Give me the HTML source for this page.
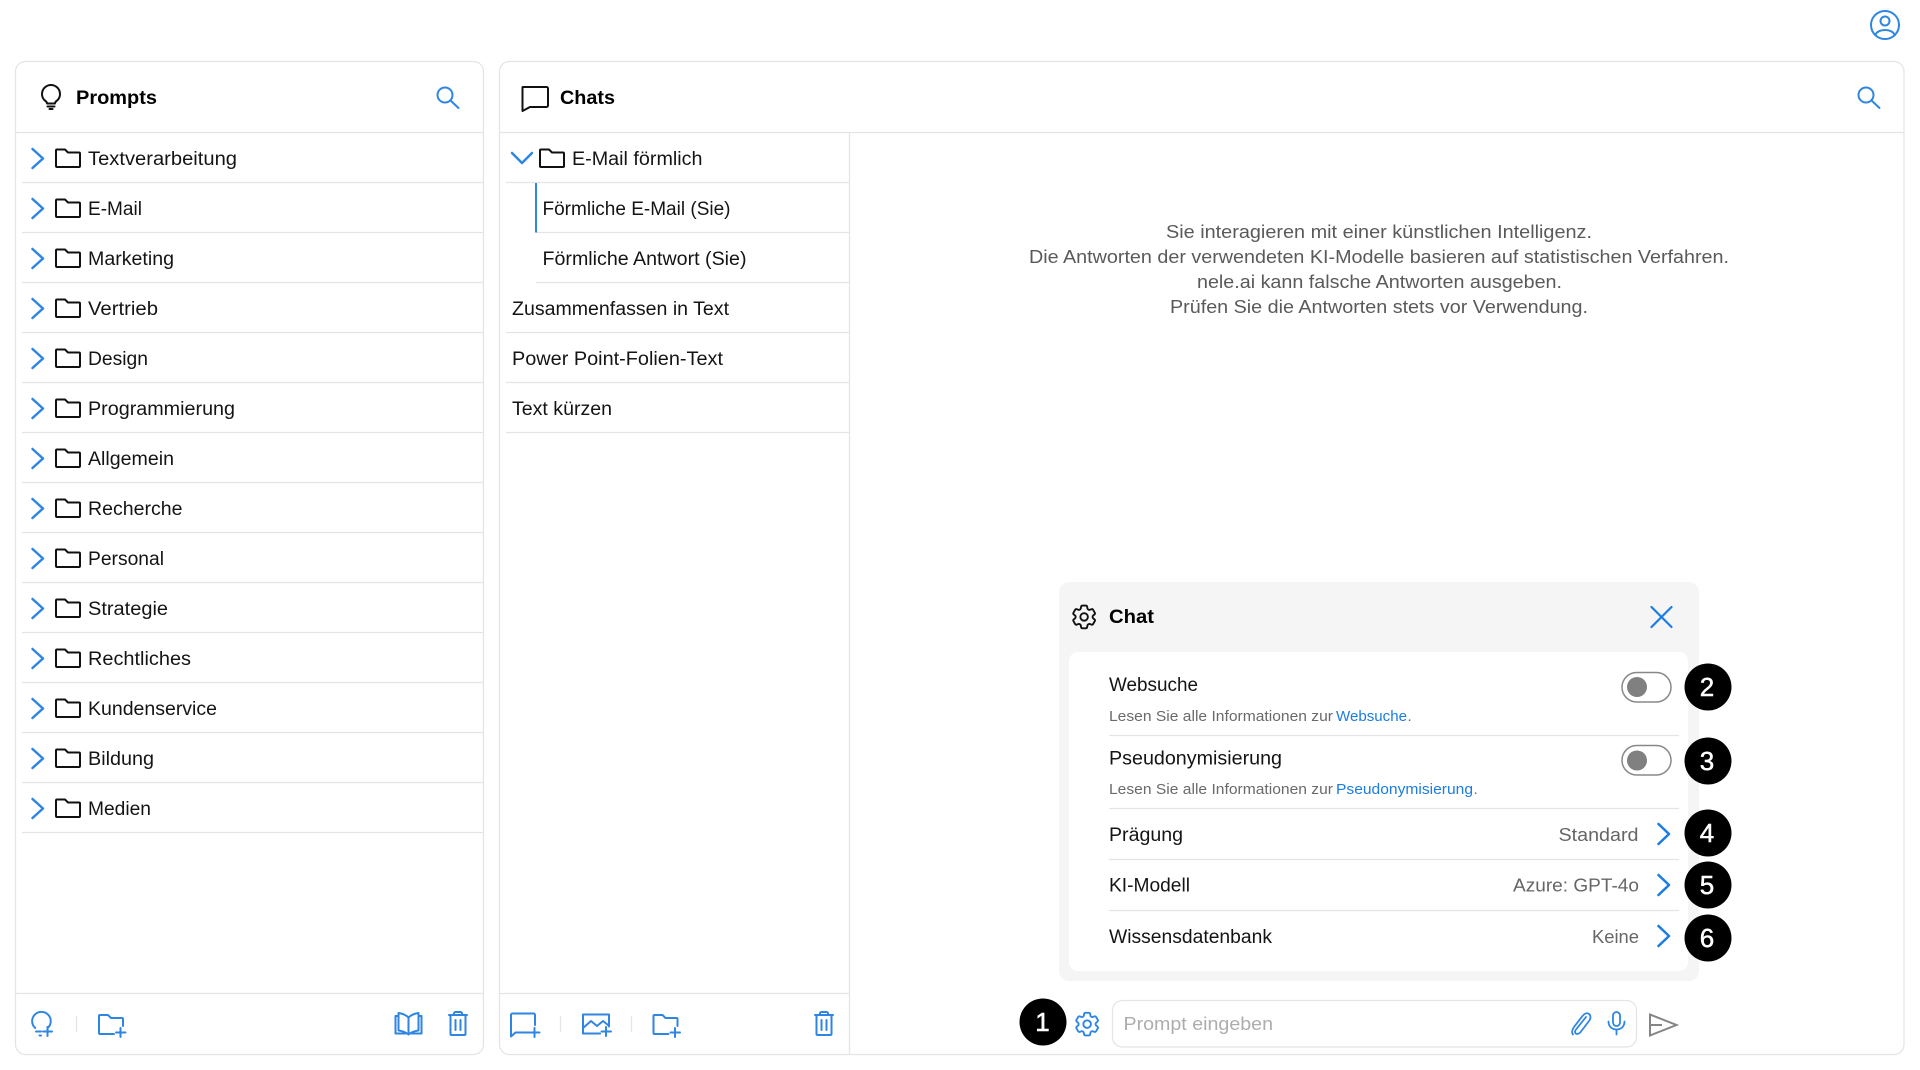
<!DOCTYPE html>
<html lang="de"><head><meta charset="utf-8"><title>Chats</title>
<style>
html,body{margin:0;padding:0;background:#fff;width:1920px;height:1070px;overflow:hidden}
svg{display:block;position:absolute;left:0;top:0}
text{font-family:"Liberation Sans",sans-serif;fill:#141414}
.r{font-size:19px}
.b{font-size:19px;font-weight:bold;fill:#000}
.c{font-size:18.5px;fill:#5a5a5a}
.s{font-size:15px;fill:#6a6a6a}
.a{font-size:15px;fill:#1b7ce2}
.v{font-size:18.5px;fill:#666}
.d{font-size:26px;fill:#fff;text-anchor:middle;stroke:#fff;stroke-width:.5}
.l{stroke:#e4e4e4;stroke-width:1.2;fill:none}
.bl{fill:none;stroke:#2f86e2;stroke-width:2;stroke-linecap:round;stroke-linejoin:round}
.w{stroke-width:2.5}
.t{stroke-width:1.8}
.bk{fill:none;stroke:#111;stroke-width:2;stroke-linecap:round;stroke-linejoin:round}
</style></head><body>
<svg width="1920" height="1070" viewBox="0 0 1920 1070" xmlns="http://www.w3.org/2000/svg">
<defs>
<g id="chev"><path d="M32.500 149L43 158.500L32.500 168" class="bl w"/></g>
<g id="folder"><path d="M57 149.500h8l3 3h11a1 1 0 0 1 1 1v12.500a1 1 0 0 1-1 1H57a1 1 0 0 1-1-1v-15.500a1 1 0 0 1 1-1z" class="bk"/></g>
<path id="gear" d="M9.594 3.94c.09-.542.56-.94 1.11-.94h2.593c.55 0 1.02.398 1.11.94l.213 1.281c.063.374.313.686.645.87.074.04.147.083.22.127.325.196.72.257 1.075.124l1.217-.456a1.125 1.125 0 0 1 1.37.49l1.296 2.247a1.125 1.125 0 0 1-.26 1.431l-1.003.827c-.293.241-.438.613-.43.992a7.723 7.723 0 0 1 0 .255c-.008.378.137.75.43.991l1.004.827c.424.35.534.955.26 1.43l-1.298 2.247a1.125 1.125 0 0 1-1.369.491l-1.217-.456c-.355-.133-.75-.072-1.076.124a6.47 6.47 0 0 1-.22.128c-.331.183-.581.495-.644.869l-.213 1.281c-.09.543-.56.94-1.11.94h-2.594c-.55 0-1.019-.398-1.11-.94l-.213-1.281c-.062-.374-.312-.686-.644-.87a6.52 6.52 0 0 1-.22-.127c-.325-.196-.72-.257-1.076-.124l-1.217.456a1.125 1.125 0 0 1-1.369-.49l-1.297-2.247a1.125 1.125 0 0 1 .26-1.431l1.004-.827c.292-.24.437-.613.43-.991a6.932 6.932 0 0 1 0-.255c.007-.38-.138-.751-.43-.992l-1.004-.827a1.125 1.125 0 0 1-.26-1.43l1.297-2.247a1.125 1.125 0 0 1 1.37-.491l1.216.456c.356.133.751.072 1.076-.124.072-.044.146-.086.22-.128.332-.183.582-.495.644-.869l.214-1.28ZM15 12a3 3 0 1 1-6 0 3 3 0 0 1 6 0Z"/>
<g id="search"><circle cx="445" cy="95" r="7.500" class="bl"/><path d="M450.500 100.500L458.500 108" class="bl"/></g>
<g id="trash"><path d="M449 1015h18M454 1015v-1.500a1.500 1.500 0 0 1 1.500-1.500h5a1.500 1.500 0 0 1 1.500 1.500v1.500M450.500 1015v19a1 1 0 0 0 1 1h13a1 1 0 0 0 1-1v-19M455.500 1020v10M460.500 1020v10" class="bl"/></g>
<g id="folderplus"><path d="M100 1015h8l3 3h11a1 1 0 0 1 1 1v7M114 1034H100a1 1 0 0 1-1-1v-17a1 1 0 0 1 1-1" class="bl"/><path d="M120.500 1028v9M116 1032.500h9.500" class="bl"/></g>
</defs>

<!-- top avatar -->
<g class="bl"><circle cx="1885" cy="25" r="14"/><circle cx="1885" cy="21" r="4.500"/><path d="M1875 35c2-3.500 6-5 10-5s8 1.500 10 5"/></g>

<!-- Prompts panel -->
<rect x="15.500" y="61.500" width="468" height="993" rx="10" class="l"/>
<path d="M16 132.500H483M16 993.500H483" class="l"/>
<g class="bk"><path d="M47 103.500c0-1.500-1.200-2.500-2.700-3.500A9 9 0 1 1 57.700 100c-1.500 1-2.700 2-2.700 3.500z"/><path d="M47.500 106.500h7"/><path d="M49.500 109h3"/></g>
<text x="76" y="104" class="b" textLength="81" lengthAdjust="spacingAndGlyphs">Prompts</text>
<use href="#search"/>

<g id="rows">
<g class="l"><path d="M22 182.500H483M22 232.500H483M22 282.500H483M22 332.500H483M22 382.500H483M22 432.500H483M22 482.500H483M22 532.500H483M22 582.500H483M22 632.500H483M22 682.500H483M22 732.500H483M22 782.500H483M22 832.500H483"/></g>
<use href="#chev"/><use href="#folder"/>
<use href="#chev" y="50"/><use href="#folder" y="50"/>
<use href="#chev" y="100"/><use href="#folder" y="100"/>
<use href="#chev" y="150"/><use href="#folder" y="150"/>
<use href="#chev" y="200"/><use href="#folder" y="200"/>
<use href="#chev" y="250"/><use href="#folder" y="250"/>
<use href="#chev" y="300"/><use href="#folder" y="300"/>
<use href="#chev" y="350"/><use href="#folder" y="350"/>
<use href="#chev" y="400"/><use href="#folder" y="400"/>
<use href="#chev" y="450"/><use href="#folder" y="450"/>
<use href="#chev" y="500"/><use href="#folder" y="500"/>
<use href="#chev" y="550"/><use href="#folder" y="550"/>
<use href="#chev" y="600"/><use href="#folder" y="600"/>
<use href="#chev" y="650"/><use href="#folder" y="650"/>
<text x="88" y="165" class="r" textLength="149" lengthAdjust="spacingAndGlyphs">Textverarbeitung</text>
<text x="88" y="215" class="r" textLength="54" lengthAdjust="spacingAndGlyphs">E-Mail</text>
<text x="88" y="265" class="r" textLength="86" lengthAdjust="spacingAndGlyphs">Marketing</text>
<text x="88" y="315" class="r" textLength="70" lengthAdjust="spacingAndGlyphs">Vertrieb</text>
<text x="88" y="365" class="r" textLength="60" lengthAdjust="spacingAndGlyphs">Design</text>
<text x="88" y="415" class="r" textLength="147" lengthAdjust="spacingAndGlyphs">Programmierung</text>
<text x="88" y="465" class="r" textLength="86" lengthAdjust="spacingAndGlyphs">Allgemein</text>
<text x="88" y="515" class="r" textLength="94.500" lengthAdjust="spacingAndGlyphs">Recherche</text>
<text x="88" y="565" class="r" textLength="76" lengthAdjust="spacingAndGlyphs">Personal</text>
<text x="88" y="615" class="r" textLength="80" lengthAdjust="spacingAndGlyphs">Strategie</text>
<text x="88" y="665" class="r" textLength="103" lengthAdjust="spacingAndGlyphs">Rechtliches</text>
<text x="88" y="715" class="r" textLength="129" lengthAdjust="spacingAndGlyphs">Kundenservice</text>
<text x="88" y="765" class="r" textLength="66" lengthAdjust="spacingAndGlyphs">Bildung</text>
<text x="88" y="815" class="r" textLength="63" lengthAdjust="spacingAndGlyphs">Medien</text>
</g>

<!-- Prompts footer -->
<g class="bl"><path d="M35.200 1028a9.300 9.300 0 1 1 12.500 0"/><path d="M36 1031.500h5M39.500 1035.500h1.500"/><path d="M47.500 1027v9M43 1031.500h9"/></g>
<path d="M76.500 1016v16" class="l"/>
<use href="#folderplus"/>
<g class="bl"><path d="M408.500 1017.500c-2.500-2.500-6.500-4-10-4.500v17.500c3.500.5 7.500 2 10 4 2.500-2 6.500-3.500 10-4V1013c-3.500.5-7.500 2-10 4.500zM408.500 1017.500v17"/><path d="M398.500 1016h-3v17.500h10M418.500 1016h3v17.500h-10"/></g>
<use href="#trash"/>

<!-- Chats panel -->
<rect x="499.500" y="61.500" width="1404.500" height="993" rx="10" class="l"/>
<path d="M500 132.500H1904M500 993.500H849M849.500 132.500V1054" class="l"/>
<path d="M523 87h23.500a1.500 1.500 0 0 1 1.500 1.500v17a1.500 1.500 0 0 1-1.500 1.500H530l-7.500 4V87.500a.5.5 0 0 1 .5-.5z" class="bk"/>
<text x="560" y="104" class="b" textLength="55" lengthAdjust="spacingAndGlyphs">Chats</text>
<use href="#search" x="1421"/>

<path d="M512 153l10 10 10-10" class="bl w"/>
<use href="#folder" x="484"/>
<text x="572" y="165" class="r" textLength="130.500" lengthAdjust="spacingAndGlyphs">E-Mail förmlich</text>
<path d="M506 182.500H849M536 232.500H849M536 282.500H849M506 332.500H849M506 382.500H849M506 432.500H849" class="l"/>
<rect x="535" y="183" width="2" height="49.500" fill="#2f86e2"/>
<text x="542.500" y="215" class="r" textLength="188" lengthAdjust="spacingAndGlyphs">Förmliche E-Mail (Sie)</text>
<text x="542.500" y="265" class="r" textLength="204" lengthAdjust="spacingAndGlyphs">Förmliche Antwort (Sie)</text>
<text x="512" y="315" class="r" textLength="217" lengthAdjust="spacingAndGlyphs">Zusammenfassen in Text</text>
<text x="512" y="365" class="r" textLength="211" lengthAdjust="spacingAndGlyphs">Power Point-Folien-Text</text>
<text x="512" y="415" class="r" textLength="100" lengthAdjust="spacingAndGlyphs">Text kürzen</text>

<!-- Chats footer -->
<g class="bl"><path d="M530 1032.500h-14.500l-4.500 4V1015a1.500 1.500 0 0 1 1.500-1.500h21a1.500 1.500 0 0 1 1.500 1.500v10"/><path d="M534.500 1028v9M530 1032.500h9.500"/></g>
<path d="M560.500 1016v16M631.500 1016v16" class="l"/>
<g class="bl"><path d="M600 1033.500h-17v-19h26v12"/><path d="M583 1028l8-7 6 5 6-5 5 4M583 1033.500h17"/><path d="M606 1027v9M601.500 1031.500h9.500"/></g>
<use href="#folderplus" x="554.500"/>
<use href="#trash" x="366"/>

<!-- Center disclaimer -->
<g>
<text x="1166" y="238" class="c" textLength="426" lengthAdjust="spacingAndGlyphs">Sie interagieren mit einer künstlichen Intelligenz.</text>
<text x="1029" y="263" class="c" textLength="700" lengthAdjust="spacingAndGlyphs">Die Antworten der verwendeten KI-Modelle basieren auf statistischen Verfahren.</text>
<text x="1197" y="288" class="c" textLength="365" lengthAdjust="spacingAndGlyphs">nele.ai kann falsche Antworten ausgeben.</text>
<text x="1170" y="313" class="c" textLength="418" lengthAdjust="spacingAndGlyphs">Prüfen Sie die Antworten stets vor Verwendung.</text>
</g>

<!-- Popup -->
<rect x="1059" y="582" width="640" height="399" rx="10" fill="#f5f5f5"/>
<rect x="1069" y="652" width="619" height="319" rx="9" fill="#fff"/>
<use href="#gear" transform="translate(1069 601.800) scale(1.260)" fill="none" stroke="#111" stroke-width="1.500"/>
<text x="1109" y="623" class="b" textLength="45" lengthAdjust="spacingAndGlyphs">Chat</text>
<path d="M1651.500 607l20 20M1671.500 607l-20 20" fill="none" stroke="#1b7ce2" stroke-width="2.200" stroke-linecap="round"/>

<text x="1109" y="691" class="r" textLength="89" lengthAdjust="spacingAndGlyphs">Websuche</text>
<text x="1109" y="721" class="s" textLength="224" lengthAdjust="spacingAndGlyphs">Lesen Sie alle Informationen zur</text>
<text x="1336" y="721" class="a" textLength="71" lengthAdjust="spacingAndGlyphs">Websuche</text>
<text x="1407.500" y="721" class="s">.</text>
<rect x="1622" y="672.500" width="49" height="29.500" rx="14.700" fill="#fff" stroke="#888" stroke-width="1.500"/>
<circle cx="1637" cy="687" r="10" fill="#808080"/>
<path d="M1109 735.500H1679" class="l"/>

<text x="1109" y="764.500" class="r" textLength="173" lengthAdjust="spacingAndGlyphs">Pseudonymisierung</text>
<text x="1109" y="794" class="s" textLength="224" lengthAdjust="spacingAndGlyphs">Lesen Sie alle Informationen zur</text>
<text x="1336" y="794" class="a" textLength="137" lengthAdjust="spacingAndGlyphs">Pseudonymisierung</text>
<text x="1473.500" y="794" class="s">.</text>
<rect x="1622" y="745.500" width="49" height="29.500" rx="14.700" fill="#fff" stroke="#888" stroke-width="1.500"/>
<circle cx="1637" cy="760.500" r="10" fill="#808080"/>
<path d="M1109 808.500H1679M1109 859.500H1679M1109 910.500H1679" class="l"/>

<text x="1109" y="841" class="r" textLength="74" lengthAdjust="spacingAndGlyphs">Prägung</text>
<text x="1109" y="891.500" class="r" textLength="81" lengthAdjust="spacingAndGlyphs">KI-Modell</text>
<text x="1109" y="943" class="r" textLength="163" lengthAdjust="spacingAndGlyphs">Wissensdatenbank</text>
<text x="1558.500" y="841" class="v" textLength="80" lengthAdjust="spacingAndGlyphs">Standard</text>
<text x="1513" y="891.500" class="v" textLength="126" lengthAdjust="spacingAndGlyphs">Azure: GPT-4o</text>
<text x="1592" y="943" class="v" textLength="47" lengthAdjust="spacingAndGlyphs">Keine</text>
<g fill="none" stroke="#1b7ce2" stroke-width="2.500" stroke-linecap="round" stroke-linejoin="round">
<path d="M1658.500 824l10.500 10-10.500 10M1658.500 875l10.500 10-10.500 10M1658.500 926l10.500 10-10.500 10"/></g>

<!-- Badges -->
<circle cx="1043" cy="1022" r="23.500" fill="#000"/><text x="1042.500" y="1031" class="d">1</text>
<circle cx="1708" cy="687" r="23.500" fill="#000"/><text x="1707" y="696" class="d">2</text>
<circle cx="1708" cy="761" r="23.500" fill="#000"/><text x="1707" y="770" class="d">3</text>
<circle cx="1708" cy="833" r="23.500" fill="#000"/><text x="1707" y="842" class="d">4</text>
<circle cx="1708" cy="885" r="23.500" fill="#000"/><text x="1707" y="894" class="d">5</text>
<circle cx="1708" cy="938" r="23.500" fill="#000"/><text x="1707" y="947" class="d">6</text>

<!-- Input bar -->
<use href="#gear" transform="translate(1072 1009) scale(1.260)" fill="none" stroke="#2f86e2" stroke-width="1.500"/>
<rect x="1112.500" y="1000.500" width="524" height="46.500" rx="10" fill="#fff" stroke="#e4e4e4" stroke-width="1.200"/>
<text x="1123.500" y="1030" font-size="18.500" style="fill:#adadad" textLength="149.500" lengthAdjust="spacingAndGlyphs">Prompt eingeben</text>
<path d="M1586 1017l-10 12.500c-2 2.500-.5 4.500 1 4.500 1.500 0 2.500-.5 4-2.500l8-10.500c2-2.500 2-5.500 0-7-2-1.500-4.500-.5-6.500 2l-8.500 11c-2 3-2.500 6-1 7.500" class="bl t"/>
<g class="bl t"><rect x="1613" y="1012" width="7" height="14" rx="3.500"/><path d="M1608.500 1021.500c0 5 3.500 8 8 8s8-3 8-8M1616.500 1029.500v5"/></g>
<g fill="none" stroke="#858585" stroke-width="2" stroke-linejoin="miter"><path d="M1650 1014.500v21l26.500-10.500zM1650 1025h12"/></g>
</svg>
</body></html>
